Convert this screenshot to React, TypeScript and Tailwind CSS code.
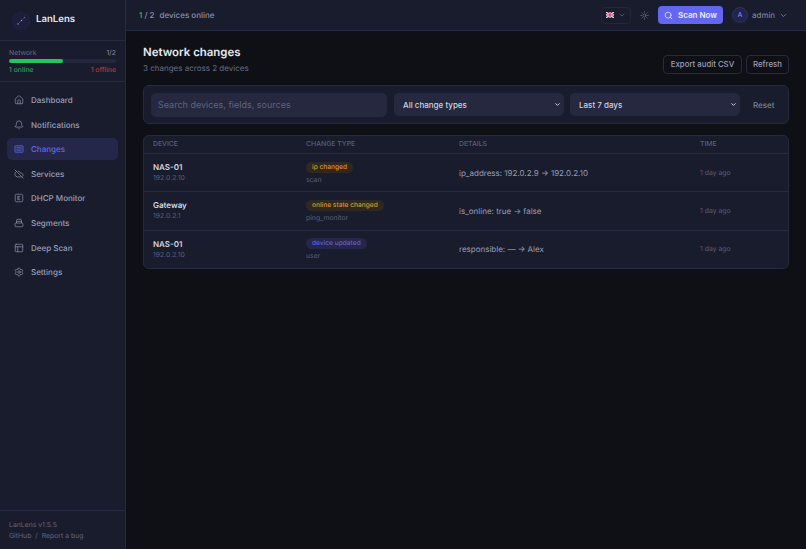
import { Bell, ChevronDown, CloudOff, House, PanelsTopLeft, Search, Settings, Sun } from 'lucide-react';

type IconProps = { size?: number; strokeWidth?: number; className?: string };

const ChangesIcon = ({ size = 10, strokeWidth = 1.5, className }: IconProps) => (
  <svg width={size} height={size} viewBox="0 0 24 24" fill="none" stroke="currentColor" strokeWidth={strokeWidth} className={className}>
    <rect x="2" y="4" width="20" height="16" rx="2" fill="currentColor" fillOpacity="0.25" />
    <path d="M7 9h8l2 3M17 15H9l-2-3" />
  </svg>
);

const DhcpIcon = ({ size = 10, strokeWidth = 1.5, className }: IconProps) => (
  <svg width={size} height={size} viewBox="0 0 24 24" fill="none" stroke="currentColor" strokeWidth={strokeWidth} className={className}>
    <rect x="3" y="3" width="18" height="18" rx="3" />
    <path d="M9 8h6M9 12h5M9 16h6M9 8v8" />
  </svg>
);

const SegmentsIcon = ({ size = 10, strokeWidth = 1.5, className }: IconProps) => (
  <svg width={size} height={size} viewBox="0 0 24 24" fill="none" stroke="currentColor" strokeWidth={strokeWidth} className={className}>
    <rect x="2.5" y="12" width="19" height="9" rx="2.5" />
    <path d="M6 12V6a3 3 0 0 1 3-3h6a3 3 0 0 1 3 3v6M6 8h12" />
  </svg>
);

const navItems = [
  { label: 'Dashboard', icon: House },
  { label: 'Notifications', icon: Bell },
  { label: 'Changes', icon: ChangesIcon, active: true },
  { label: 'Services', icon: CloudOff },
  { label: 'DHCP Monitor', icon: DhcpIcon },
  { label: 'Segments', icon: SegmentsIcon },
  { label: 'Deep Scan', icon: PanelsTopLeft },
  { label: 'Settings', icon: Settings },
];

const rows = [
  {
    device: 'NAS-01',
    ip: '192.0.2.10',
    change: 'ip changed',
    badge: 'bg-[#2e2820] text-[#d9952a]',
    source: 'scan',
    details: 'ip_address: 192.0.2.9 → 192.0.2.10',
  },
  {
    device: 'Gateway',
    ip: '192.0.2.1',
    change: 'online state changed',
    badge: 'bg-[#2e2820] text-[#d9952a]',
    source: 'ping_monitor',
    details: 'is_online: true → false',
  },
  {
    device: 'NAS-01',
    ip: '192.0.2.10',
    change: 'device updated',
    badge: 'bg-[#25264a] text-[#5f5fdc]',
    source: 'user',
    details: 'responsible: — → Alex',
  },
];

const Sidebar = () => (
  <aside className="flex w-[126px] shrink-0 flex-col border-r border-[#262a40] bg-[#191c2d]">
    <div className="flex h-[41px] items-center gap-[6px] border-b border-[#262a40] pl-[12px] pt-[1px]">
      <svg width="18" height="18" viewBox="0 0 18 18" className="shrink-0">
        <circle cx="9" cy="9" r="8.5" fill="#1c1e3a" stroke="#212345" />
        <path d="M6 12 L12 6" stroke="#3d4190" strokeWidth="0.8" />
        <circle cx="6" cy="12" r="0.8" fill="#7478d8" />
        <circle cx="9.5" cy="8.5" r="0.7" fill="#9a9ee8" />
        <circle cx="12.5" cy="5.5" r="0.7" fill="#5b5fc7" />
      </svg>
      <span className="text-[9.6px] font-semibold text-[#e6e8f0]">LanLens</span>
    </div>
    <div className="flex h-[41px] flex-col justify-center border-b border-[#262a40] px-[9px]">
      <div className="flex justify-between text-[6.86px] leading-[9px] text-[#666c85]">
        <span>Network</span>
        <span className="text-[#8a90a8]">1/2</span>
      </div>
      <div className="my-[2px] h-[4px] rounded-full bg-[#25283d]">
        <div className="h-full w-1/2 rounded-full bg-[#22c55e]" />
      </div>
      <div className="flex justify-between text-[6.86px] font-medium leading-[10px]">
        <span className="text-[#22a55a]">1 online</span>
        <span className="text-[#b8383f]">1 offline</span>
      </div>
    </div>
    <nav className="flex flex-1 flex-col gap-[2.6px] px-[7px] pt-[7px]">
      {navItems.map((item) => (
        <div
          key={item.label}
          className={`flex h-[22px] items-center gap-[7px] rounded-[5px] pl-[7px] text-[8px] font-medium ${
            item.active ? 'bg-[#25274a] text-[#6366e8]' : 'text-[#9a9fb8]'
          }`}
        >
          <item.icon size={10} strokeWidth={1.5} className="shrink-0" />
          {item.label}
        </div>
      ))}
    </nav>
    <div className="flex h-[39px] flex-col justify-center border-t border-[#262a40] px-[9px] text-[6.86px] leading-[11px] text-[#62677f]">
      <span>LanLens v1.5.5</span>
      <span>
        GitHub <span className="mx-[2px]">/</span> Report a bug
      </span>
    </div>
  </aside>
);

const Topbar = () => (
  <header className="flex h-[31px] shrink-0 items-center border-b border-[#262a40] bg-[#191c2d] pl-[13px] pr-[18px]">
    <div className="flex-1 text-[8px] font-medium">
      <span className="text-[#22c55e]">1</span>
      <span className="text-[#8a90a8]"> / 2</span>
      <span className="ml-[5px] text-[#8a90a8]">devices online</span>
    </div>
    <div className="flex h-[17px] w-[30px] items-center justify-center gap-[4px] rounded-[4px] border border-[#23263a]">
      <svg width="8" height="6" viewBox="0 0 8 6">
        <rect width="8" height="6" fill="#4a3560" />
        <path d="M0 0 L8 6 M8 0 L0 6" stroke="#e8d8e0" strokeWidth="1.2" />
        <path d="M4 0 V6 M0 3 H8" stroke="#e8e8ee" strokeWidth="2" />
        <path d="M4 0 V6 M0 3 H8" stroke="#d8344e" strokeWidth="1.2" />
      </svg>
      <ChevronDown size={8} className="text-[#666c85]" />
    </div>
    <Sun size={9} className="ml-[9px] text-[#666c85]" />
    <button className="ml-[9px] flex h-[18px] w-[65px] items-center justify-center gap-[5px] rounded-[4px] bg-[#6366f1] text-[8px] font-semibold text-[#eef]">
      <Search size={9} strokeWidth={2} />
      Scan Now
    </button>
    <div className="ml-[9px] flex h-[16px] w-[16px] items-center justify-center rounded-full border border-[#2e3160] bg-[#22244a] text-[6.86px] font-semibold text-[#6f72e8]">
      A
    </div>
    <span className="ml-[4px] w-[23px] text-[8px] text-[#8a90a8]">admin</span>
    <ChevronDown size={9} className="ml-[4px] text-[#8a90a8]" />
  </header>
);

const SelectBox = ({ label }: { label: string }) => (
  <div className="relative flex w-[170px]">
    <select className="h-[23px] w-full appearance-none rounded-[5px] bg-[#25283f] px-[9px] text-[8px] font-medium text-[#d0d3e0] outline-none">
      <option>{label}</option>
    </select>
    <ChevronDown size={7} strokeWidth={3} className="pointer-events-none absolute right-[3px] top-[8px] text-[#e6e8f0]" />
  </div>
);

const Toolbar = () => (
  <div className="mt-[11px] flex h-[39px] items-center rounded-[6px] border border-[#262a40] bg-[#191c2d] px-[7px]">
    <input
      placeholder="Search devices, fields, sources"
      className="h-[24px] w-[236px] rounded-[5px] bg-[#25283f] px-[7px] text-[9px] outline-none placeholder:text-[#5f6480]"
    />
    <div className="ml-[7px] flex">
      <SelectBox label="All change types" />
    </div>
    <div className="ml-[6px] flex">
      <SelectBox label="Last 7 days" />
    </div>
    <span className="ml-[13px] text-[8px] font-medium text-[#7d829c]">Reset</span>
  </div>
);

const ChangesTable = () => (
  <div className="mt-[11px] overflow-hidden rounded-[6px] border border-[#262a40] bg-[#191c2d]">
    <table className="w-full table-fixed text-left">
      <thead>
        <tr className="h-[17.5px] border-b border-[#262a40] text-[6.86px] font-medium text-[#5a5f78]">
          <th className="w-[162px] pl-[9px] font-medium">DEVICE</th>
          <th className="w-[153px] font-medium">CHANGE TYPE</th>
          <th className="w-[241px] font-medium">DETAILS</th>
          <th className="font-medium">TIME</th>
        </tr>
      </thead>
      <tbody>
        {rows.map((row, i) => (
          <tr key={i} className={`h-[38.3px] ${i < rows.length - 1 ? 'border-b border-[#262a40]' : ''}`}>
            <td className="pl-[9px]">
              <div className="text-[8px] font-semibold leading-[11px] text-[#d5d8e4]">{row.device}</div>
              <div className="text-[6.86px] leading-[10px] text-[#5a5f78]">{row.ip}</div>
            </td>
            <td className="pt-[1px]">
              <span className={`block w-fit rounded-full px-[6px] text-[6.6px] font-medium leading-[11px] ${row.badge}`}>
                {row.change}
              </span>
              <div className="mt-[2px] text-[6.86px] leading-[10px] text-[#5a5f78]">{row.source}</div>
            </td>
            <td className="text-[8px] text-[#9a9fb8]">{row.details}</td>
            <td className="text-[6.86px] text-[#5a5f78]">1 day ago</td>
          </tr>
        ))}
      </tbody>
    </table>
  </div>
);

const App = () => {
  return (
    <div className="flex h-[549px] w-[806px] overflow-hidden bg-[#0f1016] font-['Inter',sans-serif] [text-rendering:geometricPrecision] [color-scheme:dark]">
      <Sidebar />
      <div className="flex min-w-0 flex-1 flex-col">
        <Topbar />
        <main className="px-[17px] pt-[14px]">
          <div className="flex items-start justify-between">
            <div>
              <h1 className="text-[11.43px] font-semibold leading-[15px] text-[#e6e8f0]">Network changes</h1>
              <p className="mt-[3px] text-[8px] leading-[11px] text-[#666c85]">3 changes across 2 devices</p>
            </div>
            <div className="mt-[10px] flex gap-[4px]">
              <button className="h-[19px] w-[79px] rounded-[4px] border border-[#262a40] text-[7.8px] font-medium text-[#9a9fb8]">
                Export audit CSV
              </button>
              <button className="h-[19px] w-[43px] rounded-[4px] border border-[#262a40] text-[7.8px] font-medium text-[#9a9fb8]">
                Refresh
              </button>
            </div>
          </div>
          <Toolbar />
          <ChangesTable />
        </main>
      </div>
    </div>
  );
};

export default App;
